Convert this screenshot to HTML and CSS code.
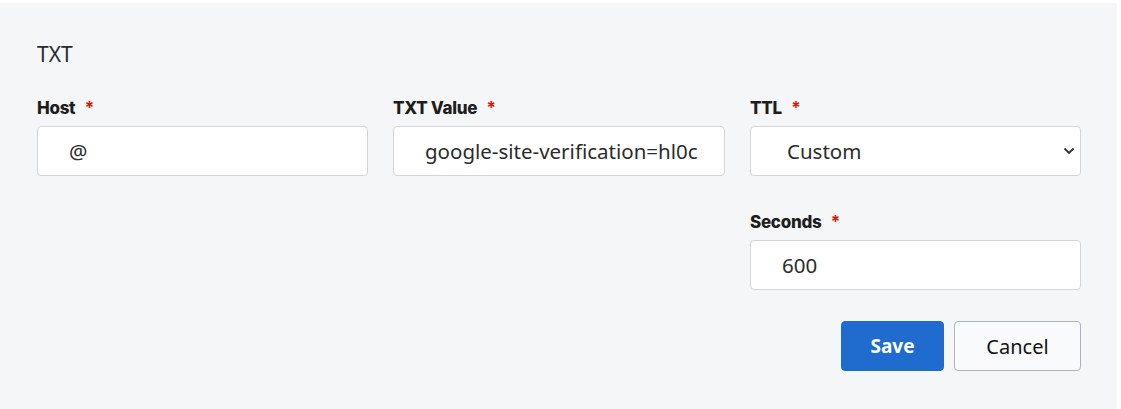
FILE: index.html
```html
<!DOCTYPE html>
<html>
<head>
<meta charset="utf-8">
<link rel="stylesheet" href="styles.css">
</head>
<body>
<div class="panel">
  <div class="title">TXT</div>
  <div class="grid">
    <div class="field">
      <label class="label">Host <span class="req">*</span></label>
      <div class="input">@</div>
    </div>
    <div class="field">
      <label class="label">TXT Value <span class="req">*</span></label>
      <div class="input">google-site-verification=hl0c</div>
    </div>
    <div class="field">
      <label class="label">TTL <span class="req">*</span></label>
      <div class="input select">
        <span>Custom</span>
        <svg class="chev" width="12" height="8" viewBox="0 0 12 8"><path d="M1.5 1.5 L6 6 L10.5 1.5" fill="none" stroke="#333" stroke-width="1.8"/></svg>
      </div>
    </div>
    <div class="field col3">
      <label class="label">Seconds <span class="req">*</span></label>
      <div class="input sec">600</div>
    </div>
    <div class="actions col3">
      <button class="btn save">Save</button>
      <button class="btn cancel">Cancel</button>
    </div>
  </div>
</div>
</body>
</html>
```
FILE: styles.css
```css
html, body {
  margin: 0;
  padding: 0;
  background: #ffffff;
}
body {
  font-family: "Noto Sans", "Open Sans", sans-serif;
  color: #2b2b2b;
}
.panel {
  margin-top: 3px;
  width: 1117px;
  height: 406px;
  box-sizing: border-box;
  background: #f5f6f8;
  padding: 37px 36px 0 37px;
}
.title {
  font-size: 21px;
  line-height: 28px;
  color: #2b2b2b;
}
.grid {
  margin-top: 30px;
  display: grid;
  grid-template-columns: 331px 332px 331px;
  column-gap: 25px;
  row-gap: 36px;
}
.col3 {
  grid-column: 3;
}
.field {
  display: flex;
  flex-direction: column;
}
.label {
  font-family: "Inter", sans-serif;
  font-weight: 800;
  font-size: 17px;
  line-height: 20px;
  color: #1d1d1d;
  margin-bottom: 8px;
  letter-spacing: -0.3px;
}
.req {
  color: #db1802;
  margin-left: 6px;
  font-weight: 700;
}
.input {
  height: 50px;
  box-sizing: border-box;
  background: #ffffff;
  border: 1px solid #d4d5d9;
  border-radius: 4px;
  padding: 0 4px 0 31px;
  display: flex;
  align-items: center;
  font-size: 20.5px;
  color: #2b2b2b;
  white-space: nowrap;
  overflow: hidden;
}
.select {
  padding-left: 36px;
  padding-right: 5px;
  justify-content: space-between;
}
.actions {
  margin-top: -5px;
  display: flex;
  justify-content: flex-end;
  gap: 10px;
}
.btn {
  height: 50px;
  border-radius: 4px;
  font-family: "Noto Sans", "Open Sans", sans-serif;
  font-size: 20px;
  cursor: pointer;
}
.save {
  width: 103px;
  background: #1f6bce;
  border: 1px solid #1f6bce;
  color: #ffffff;
  font-weight: 700;
  font-size: 19px;
}
.cancel {
  width: 127px;
  background: #f9fafb;
  border: 1px solid #a9b3c1;
  color: #111111;
}
```
